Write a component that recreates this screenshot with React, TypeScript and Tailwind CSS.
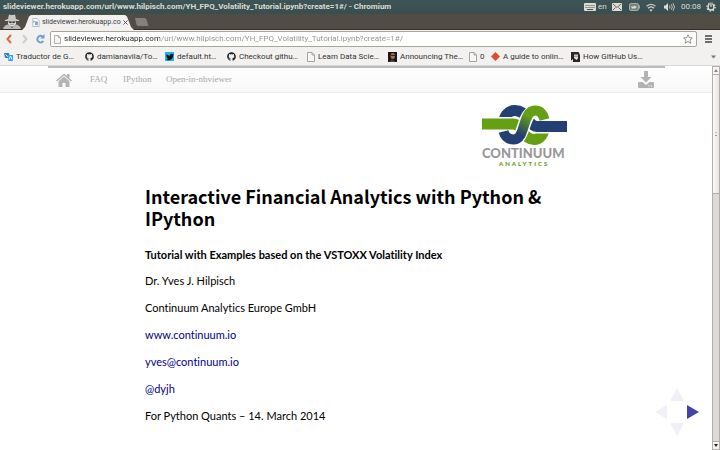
import type { ReactNode } from "react";
import { FaGithub, FaTwitter } from "react-icons/fa";

function PageIcon({ className = "h-[10px] w-2" }: { className?: string }) {
  return (
    <svg viewBox="0 0 8 10" className={className} aria-hidden="true">
      <path d="M.5.5h4.500l2.500 2.500v6.500h-7z" fill="#f6f6f6" stroke="#a3a3a3" />
      <path d="M5 .5V3h2.500" fill="none" stroke="#a3a3a3" />
    </svg>
  );
}

function TitleBar() {
  return (
    <header className="flex h-[14px] items-center justify-between bg-linear-to-b from-[#3d5557] to-[#3a4d4f] pl-[3px] pr-1 text-[8px] text-[#dfdbd2]">
      <h1 className="whitespace-nowrap font-bold">
        slideviewer.herokuapp.com/url/www.hilpisch.com/YH_FPQ_Volatility_Tutorial.ipynb?create=1#/ - Chromium
      </h1>
      <div className="flex items-center">
        <svg viewBox="0 0 12 8" className="h-2 w-3" aria-hidden="true">
          <rect width="12" height="8" rx="1" fill="#dfdbd2" />
          <path d="M1.500 2.500h9M1.500 4.500h9" stroke="#3c5052" strokeDasharray="1 1" />
          <path d="M3 6.500h6" stroke="#3c5052" />
        </svg>
        <span className="ml-[2px] w-[14px]">en</span>
        <svg viewBox="0 0 10 8" className="h-2 w-[10px]" aria-hidden="true">
          <rect width="10" height="8" rx="1" fill="#dfdbd2" />
          <path d="M1 1l4 3.500L9 1M1 7l2.500-2.500M9 7L6.500 4.500" fill="none" stroke="#3c5052" strokeWidth=".8" />
        </svg>
        <svg viewBox="0 0 11 8" className="ml-[7px] h-2 w-[11px]" aria-hidden="true">
          <rect x=".5" y=".5" width="9" height="7" rx="1.500" fill="#77827f" stroke="#a3a9a5" />
          <path d="M10.500 2.500v3" stroke="#a3a9a5" />
          <path d="M2 3.500h3v-1l3 1.500-2 1.500H3z" fill="#dfdbd2" />
        </svg>
        <svg viewBox="0 0 12 9" className="ml-[5px] h-[9px] w-3" fill="none" aria-hidden="true">
          <path d="M1.500 3.300Q6-.5 10.500 3.300" stroke="#bfc2bc" strokeWidth="1.200" />
          <path d="M3 5.300Q6 2.500 9 5.300" stroke="#dfdbd2" strokeWidth="1.200" />
          <path d="M4.300 6.500h3.400L6 8.700z" fill="#dfdbd2" />
        </svg>
        <svg viewBox="0 0 12 10" className="ml-[6px] h-[10px] w-3" fill="none" aria-hidden="true">
          <path d="M1 3.500h1.500L5 1v8L2.500 6.500H1z" fill="#dfdbd2" />
          <path d="M6.500 3.500q1 1.500 0 3M8.300 2.300q2 2.700 0 5.400M10 1.200q3 3.800 0 7.600" stroke="#cfcdc5" strokeWidth=".9" />
        </svg>
        <time className="ml-[6px] w-[21px] whitespace-nowrap">00:08</time>
        <svg viewBox="0 0 10 10" className="ml-1 h-[10px] w-[10px]" fill="none" aria-hidden="true">
          <circle cx="5" cy="5" r="3" stroke="#dfdbd2" strokeWidth="1.400" />
          <circle cx="5" cy="5" r="4.200" stroke="#dfdbd2" strokeWidth="1.200" strokeDasharray="1.300 2" />
          <path d="M5 0v5" stroke="#3c5052" strokeWidth="2.600" />
          <path d="M5 .5v4.500" stroke="#dfdbd2" strokeWidth="1.200" />
        </svg>
      </div>
    </header>
  );
}

function TabStrip() {
  return (
    <div className="flex h-4 items-end border-b border-[#33302b] bg-[#514d45]">
      <svg viewBox="0 0 20 15" className="ml-[2px] h-[15px] w-5" aria-hidden="true">
        <path d="M6 5l1-4.500q3 1 6 0L14 5l3 1v1H3V6z" fill="#c9c8c5" />
        <path d="M6 7h8v3l-2 2.500H8L6 10z" fill="#dedddb" />
        <path d="M6.500 7.500h3v1.500h-2zM10.500 7.500h3l-1 1.500h-2zM8 10.500h4" fill="#3b3935" stroke="#57544f" strokeWidth=".4" />
        <path d="M1 15q1-4 5-4.500L10 14l4-3.500q4 .5 5 4.500z" fill="#b9b8b5" />
      </svg>
      <div className="-mb-px flex h-[15px] w-[112px] items-center bg-[#f2f1f0] pl-[10px] text-[7px] text-[#3c3c3c] [clip-path:polygon(0_100%,3px_80%,7px_10%,9px_0,103px_0,105px_10%,109px_80%,112px_100%)]">
        <svg viewBox="0 0 8 10" className="h-[9px] w-2" aria-hidden="true">
          <path d="M.5.5h4.500l2.500 2.500v6.500h-7z" fill="#fff" stroke="#a9b4c0" />
          <path d="M3 4h3v4H3zM1 3h1.500v2H1z" fill="#7f9fc4" />
        </svg>
        <span className="ml-[2px] whitespace-nowrap">slideviewer.herokuapp.co</span>
        <button type="button" aria-label="Close tab" className="ml-[2px]">
          <svg viewBox="0 0 5 5" className="h-[5px] w-[5px]" aria-hidden="true">
            <path d="M.5.5l4 4M4.500.5l-4 4" stroke="#555" />
          </svg>
        </button>
      </div>
      <button type="button" aria-label="New tab" className="mb-[3px]">
        <svg viewBox="0 0 15 8" className="h-2 w-[15px]" aria-hidden="true">
          <path d="M1 0h9.500q1.500 0 2 1.500L14.500 8H4.500Q3 8 2.500 6.500z" fill="#858079" />
        </svg>
      </button>
    </div>
  );
}

function NavBar() {
  return (
    <div className="flex h-[18px] items-center bg-[#f2f1f0] pl-[6px] pr-2">
      <button type="button" aria-label="Back">
        <svg viewBox="0 0 6 10" className="h-[10px] w-[6px]" aria-hidden="true">
          <path d="M5 1L1.500 5 5 9" fill="none" stroke="#dd6a3a" strokeWidth="2" />
        </svg>
      </button>
      <button type="button" aria-label="Forward" className="ml-[10px]">
        <svg viewBox="0 0 6 10" className="h-[10px] w-[6px]" aria-hidden="true">
          <path d="M1 1l3.500 4L1 9" fill="none" stroke="#cfcecb" strokeWidth="2" />
        </svg>
      </button>
      <button type="button" aria-label="Reload" className="ml-2">
        <svg viewBox="0 0 9 10" className="h-[10px] w-[9px]" aria-hidden="true">
          <path d="M6.500 2.500A3.200 3.200 0 1 0 7.300 7" fill="none" stroke="#6d9fd3" strokeWidth="1.900" />
          <path d="M8.500 0v4.500H4.200z" fill="#6d9fd3" />
        </svg>
      </button>
      <form className="ml-[5px] flex h-4 flex-1 items-center rounded-[2px] border border-[#aaa49b] bg-white px-[3px]">
        <PageIcon className="h-[9px] w-[7px]" />
        <input
          aria-label="Address"
          type="text"
          readOnly
          value="slideviewer.herokuapp.com/url/www.hilpisch.com/YH_FPQ_Volatility_Tutorial.ipynb?create=1#/"
          className="ml-[3px] h-3 min-w-0 flex-1 bg-[linear-gradient(to_right,#222_96px,#8f8f8f_96px)] bg-clip-text text-[8px] text-transparent outline-none"
        />
        <button type="button" aria-label="Bookmark this page">
          <svg viewBox="0 0 10 10" className="h-[10px] w-[10px]" aria-hidden="true">
            <path d="M5 .7l1.300 2.900 3.100.3L7 6l.7 3.200L5 7.500 2.300 9.200 3 6 .6 3.900l3.100-.3z" fill="#fff" stroke="#777" strokeWidth=".8" />
          </svg>
        </button>
      </form>
      <button type="button" aria-label="Menu" className="ml-2">
        <svg viewBox="0 0 7 8" className="h-2 w-[7px]" aria-hidden="true">
          <path d="M0 1h7M0 4h7M0 7h7" stroke="#444" strokeWidth="1.700" />
        </svg>
      </button>
    </div>
  );
}

const bookmarks: { label: string; width: string; icon: ReactNode }[] = [
  {
    label: "Traductor de G…",
    width: "w-[81px]",
    icon: (
      <svg viewBox="0 0 9 9" className="h-[9px] w-[9px]" aria-hidden="true">
        <path d="M0 1h5l1 5H1z" fill="#2c84c4" />
        <path d="M3 3h6v6H4.500z" fill="#2aa5e8" />
        <path d="M1.500 2.500l2 2M5 7.500L6.500 4 8 7.500" stroke="#fff" fill="none" />
      </svg>
    ),
  },
  { label: "damianavila/To…", width: "w-[80px]", icon: <FaGithub className="h-[9px] w-[9px] text-[#222]" /> },
  {
    label: "default.ht…",
    width: "w-[62px]",
    icon: (
      <span className="flex h-[9px] w-[9px] items-center justify-center bg-[#1bb2ee]">
        <FaTwitter className="h-2 w-2 text-[#111]" />
      </span>
    ),
  },
  { label: "Checkout githu…", width: "w-[80px]", icon: <FaGithub className="h-[9px] w-[9px] text-[#222]" /> },
  { label: "Learn Data Scie…", width: "w-[81px]", icon: <PageIcon /> },
  {
    label: "Announcing The…",
    width: "w-[81px]",
    icon: (
      <svg viewBox="0 0 9 10" className="h-[10px] w-[9px]" aria-hidden="true">
        <path d="M0 0h9v10H0z" fill="#1b1714" />
        <ellipse cx="4.800" cy="4" rx="2.200" ry="3" fill="#a3705a" />
        <path d="M3 3.500h4" stroke="#3a2018" />
        <path d="M1 10l3-2.500L8 10z" fill="#444b3a" />
      </svg>
    ),
  },
  { label: "0", width: "w-[22px]", icon: <PageIcon /> },
  {
    label: "A guide to onlin…",
    width: "w-[80px]",
    icon: (
      <svg viewBox="0 0 9 9" className="h-[9px] w-[9px]" aria-hidden="true">
        <path d="M4.500 0L9 4.500 4.500 9 0 4.500z" fill="#d94f2b" />
      </svg>
    ),
  },
  {
    label: "How GitHub Us…",
    width: "w-[80px]",
    icon: (
      <svg viewBox="0 0 9 10" className="h-[10px] w-[9px]" aria-hidden="true">
        <path d="M0 0h9v10H0z" fill="#2a2528" />
        <path d="M3 2.500h4v4L5.500 8 3 6zM0 8.500l2-1.500v3H0zM7.500 0H9v3z" fill="#e5dcdf" />
        <path d="M3.500 4.200h1M5.500 4.200h1" stroke="#2a2528" />
      </svg>
    ),
  },
];

function BookmarkBar() {
  return (
    <nav aria-label="Bookmarks" className="flex h-[18px] items-center border-b border-[#dcdad7] bg-[#f2f1f0] pl-1 pr-1 text-[8px] text-[#333]">
      {bookmarks.map((b) => (
        <a key={b.label} href="#" className={`flex shrink-0 items-center gap-[3px] whitespace-nowrap ${b.width}`}>
          {b.icon}
          {b.label}
        </a>
      ))}
      <button type="button" aria-label="More bookmarks" className="ml-auto">
        <svg viewBox="0 0 5 4" className="h-1 w-[5px]" aria-hidden="true">
          <path d="M0 .5h5L2.500 3.500z" fill="#777" />
        </svg>
      </button>
    </nav>
  );
}

function SiteNav() {
  return (
    <nav aria-label="Slide viewer" className="border-b border-[#efefef] bg-linear-to-b from-white to-[#f8f8f8] font-['Liberation_Serif',serif] text-[9px] text-[#a8a8a8]">
      <div className="ml-12 mr-[47px] h-[2px] bg-[#bdbdbd]" />
      <div className="flex h-6 items-center pl-14 pr-[58px]">
        <a href="#" aria-label="Home" className="w-[34px]">
          <svg viewBox="0 0 16 14" className="h-[14px] w-4" fill="#b3b3b3" aria-hidden="true">
            <path d="M8 .5L11 3V1h2.500v4.200L16 7.400l-.9 1L8 2.500.9 8.400l-.9-1z" />
            <path d="M8 3.600l5.500 4.600V14H9.500v-4h-3v4h-4V8.200z" />
          </svg>
        </a>
        <a href="#" className="w-[33px]">FAQ</a>
        <a href="#" className="w-[43px]">IPython</a>
        <a href="#">Open-in-nbviewer</a>
        <a href="#" aria-label="Download" className="ml-auto pb-[2px]">
          <svg viewBox="0 0 16 17" className="h-[17px] w-4" fill="#b3b3b3" aria-hidden="true">
            <path d="M6 0h4v6h3.500L8 11.500 2.500 6H6z" />
            <path d="M1 11h3.500L8 14l3.500-3H15q1 0 1 1v4q0 1-1 1H1q-1 0-1-1v-4q0-1 1-1z" />
            <path d="M10.500 15h1M13 15h1" stroke="#fff" strokeWidth="1.200" />
          </svg>
        </a>
      </div>
    </nav>
  );
}

function ContinuumLogo() {
  return (
    <svg viewBox="0 0 86 62" className="h-[62px] w-[86px]" role="img" aria-label="Continuum Analytics">
      <defs>
        <linearGradient id="strand" gradientUnits="userSpaceOnUse" x1="38" y1="29" x2="48" y2="11">
          <stop offset="0" stopColor="#243f73" />
          <stop offset="1" stopColor="#64a012" />
        </linearGradient>
      </defs>
      <g fill="none" strokeWidth="11">
        <path d="M22.500 20C22.500 11 27 5.500 34 5.500C40 5.500 44 9 47 15" stroke="#243f73" />
        <path d="M63.500 20C63.500 29 59 34.500 53 34.500C47 34.500 44 31 41 26" stroke="#64a012" />
        <path d="M12 19H32Q37 19 41 26" stroke="#fff" strokeWidth="14" />
        <path d="M1 19H32Q37 19 41 26" stroke="#64a012" />
        <path d="M74 21.500H56Q51 21.500 47 14" stroke="#fff" strokeWidth="14" />
        <path d="M86 21.500H56Q51 21.500 47 14" stroke="#243f73" />
        <path d="M37 33C43 28 43 11 51 7" stroke="#fff" strokeWidth="13" />
        <path d="M22.500 26.500C24 32 28 34.500 33 34.500C45 34.500 41 5.500 54 5.500C59 5.500 62 9 63.500 14.500" stroke="url(#strand)" strokeWidth="10" />
      </g>
      <text x="1" y="53" fontSize="13" fontWeight="900" fill="#97989a" className="font-['Lato',sans-serif]">CONTINUUM</text>
      <text x="18" y="61" fontSize="6" fontWeight="900" fill="#64a012" className="font-['Lato',sans-serif] tracking-[2px]">ANALYTICS</text>
    </svg>
  );
}

function SlideControls() {
  return (
    <div className="absolute bottom-[14px] right-[13px] grid grid-cols-[auto_auto_auto] items-center justify-items-center gap-x-[3px] gap-y-1">
      <button type="button" aria-label="Previous slide" className="col-start-1 row-start-2">
        <svg viewBox="0 0 12 14" className="h-[14px] w-3" aria-hidden="true"><path d="M0 7L12 0v14z" fill="#f0f0f8" /></svg>
      </button>
      <button type="button" aria-label="Slide above" className="col-start-2 row-start-1">
        <svg viewBox="0 0 14 13" className="h-[13px] w-[14px]" aria-hidden="true"><path d="M7 0l7 13H0z" fill="#f0f0f8" /></svg>
      </button>
      <button type="button" aria-label="Slide below" className="col-start-2 row-start-3">
        <svg viewBox="0 0 14 13" className="h-[13px] w-[14px]" aria-hidden="true"><path d="M7 13l7-13H0z" fill="#f0f0f8" /></svg>
      </button>
      <button type="button" aria-label="Next slide" className="col-start-3 row-start-2">
        <svg viewBox="0 0 12 14" className="h-[14px] w-3" aria-hidden="true"><path d="M12 7L0 0v14z" fill="#4343ab" /></svg>
      </button>
    </div>
  );
}

function ScrollBar() {
  return (
    <div aria-hidden="true" className="flex w-2 flex-col border-x border-[#b0adaa] bg-[#dcdbda]">
      <span className="flex h-[9px] items-center justify-center border-y border-[#b0adaa] bg-[#f5f4f3]">
        <svg viewBox="0 0 4 3" className="h-[3px] w-1"><path d="M2 0l2 3H0z" fill="#8a8a8a" /></svg>
      </span>
      <span className="flex h-[119px] flex-col items-center justify-center gap-[2px] border-b border-[#b0adaa] bg-linear-to-r from-[#fafaf9] to-[#e6e5e4]">
        <i className="h-px w-[2px] bg-[#bbb]" />
        <i className="h-px w-[2px] bg-[#999]" />
      </span>
      <span className="mt-auto flex h-[9px] items-center justify-center border-y border-[#b0adaa] bg-[#f5f4f3]">
        <svg viewBox="0 0 4 3" className="h-[3px] w-1"><path d="M2 3l2-3H0z" fill="#222" /></svg>
      </span>
    </div>
  );
}

export default function App() {
  return (
    <div className="flex min-h-screen flex-col bg-white font-['Roboto',sans-serif]">
      <TitleBar />
      <TabStrip />
      <NavBar />
      <BookmarkBar />
      <div className="flex flex-1">
        <main className="relative min-w-0 flex-1">
          <SiteNav />
          <section className="mx-auto max-w-[422px] pt-3 font-['Lato',sans-serif] text-[11px] leading-[15px] text-black [font-variant-ligatures:none]">
            <div className="flex justify-end">
              <ContinuumLogo />
            </div>
            <h2 className="mt-[18px] max-w-[412px] font-['Noto_Sans_CJK_JP',sans-serif] text-[18px] font-bold leading-[22px]">
              Interactive Financial Analytics with Python &amp; IPython
            </h2>
            <h3 className="mt-[18px] font-bold">Tutorial with Examples based on the VSTOXX Volatility Index</h3>
            <div className="mt-[11px] flex flex-col items-start gap-3">
              <p>Dr. Yves J. Hilpisch</p>
              <p>Continuum Analytics Europe GmbH</p>
              <a href="#" className="text-[#00008b]">www.continuum.io</a>
              <a href="#" className="text-[#00008b]">yves@continuum.io</a>
              <a href="#" className="text-[#00008b]">@dyjh</a>
              <p>For Python Quants – 14. March 2014</p>
            </div>
          </section>
          <SlideControls />
        </main>
        <ScrollBar />
      </div>
    </div>
  );
}
